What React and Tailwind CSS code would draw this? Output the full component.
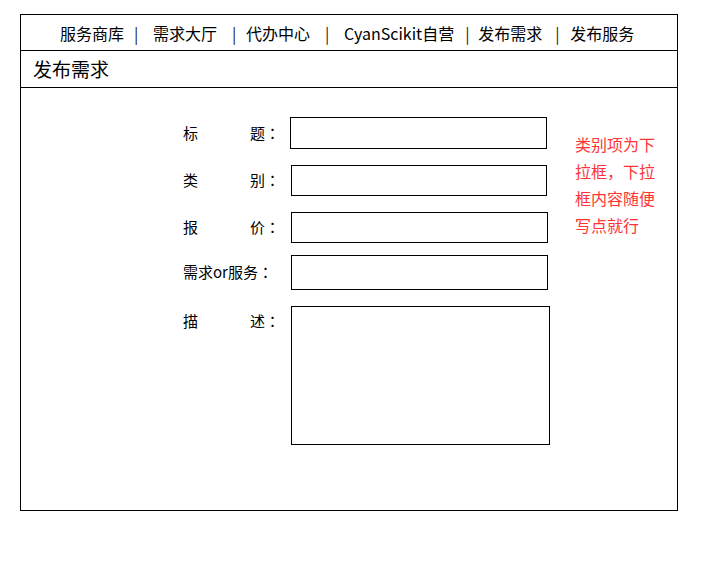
import React from "react"

const font = { fontFamily: '"Noto Sans CJK SC", "Microsoft YaHei", sans-serif' }

function Sep({ className = "" }) {
  return <span className={`inline-block w-[3px] text-center text-[#222] ${className}`}>|</span>
}

// full-width colon centered in its cell, like the reference font
function Colon() {
  return <span className="font-['Noto_Sans_CJK_JP',sans-serif]">：</span>
}

function Label({ left, right, full }) {
  return (
    <div className="w-[97px] shrink-0 flex justify-between text-[15px] text-black">
      {full
        ? <span>{full}<Colon /></span>
        : <><span>{left}</span><span>{right}<Colon /></span></>}
    </div>
  )
}

function Row({ label, h, mt, w = "w-[257px]", ml = "ml-[11px]" }) {
  return (
    <div className={`flex items-center ${mt}`}>
      {label}
      <div className={`${ml} ${w} ${h} border border-black bg-white`} />
    </div>
  )
}

export default function App() {
  return (
    <div className="pt-[14px] pl-[20px] bg-white min-h-[569px]" style={font}>
      <div className="w-[658px] h-[497px] border border-black flex flex-col">
        <div className="h-[36px] border-b border-black flex items-center pl-[39px] text-[16px] text-black leading-none whitespace-nowrap">
          <span>服务商库</span>
          <Sep className="ml-[10px]" />
          <span className="ml-[16px]">需求大厅</span>
          <Sep className="ml-[15px]" />
          <span className="ml-[11px]">代办中心</span>
          <Sep className="ml-[15px]" />
          <span className="ml-[16px]">CyanScikit自营</span>
          <Sep className="ml-[11px]" />
          <span className="ml-[10px]">发布需求</span>
          <Sep className="ml-[13px]" />
          <span className="ml-[12px]">发布服务</span>
        </div>
        <div className="h-[37px] border-b border-black flex items-center pl-[12px] text-[19px] text-black">
          发布需求
        </div>
        <div className="flex pt-[29px] pl-[162px]">
          <div className="flex flex-col">
            <Row label={<Label left="标" right="题" />} h="h-[32px]" mt="" ml="ml-[10px]" />
            <Row label={<Label left="类" right="别" />} h="h-[31px]" mt="mt-[16px]" w="w-[256px]" />
            <Row label={<Label left="报" right="价" />} h="h-[31px]" mt="mt-[16px]" />
            <Row label={<Label full="需求or服务" />} h="h-[35px]" mt="mt-[12px]" />
            <div className="flex items-start mt-[16px]">
              <div className="pt-[4px] leading-[22px]">
                <Label left="描" right="述" />
              </div>
              <div className="ml-[11px] w-[259px] h-[139px] border border-black bg-white" />
            </div>
          </div>
          <div className="ml-[25px] mt-[14px] w-[84px] text-[16px] leading-[27px] text-[#ff3333]">
            类别项为下拉框，下拉框内容随便写点就行
          </div>
        </div>
      </div>
    </div>
  )
}
